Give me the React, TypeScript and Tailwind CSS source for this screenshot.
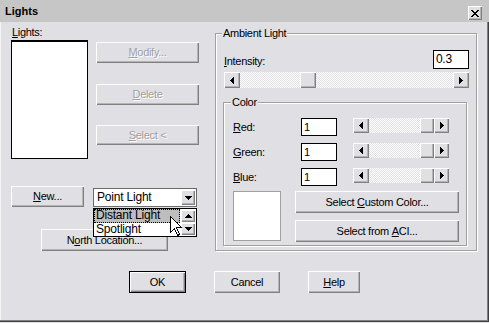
import React from "react";

const raised =
  "bg-[#e0dfe3] shadow-[inset_1px_1px_0_#fff,inset_-1px_-1px_0_#808080,inset_-2px_-2px_0_#b4b4b4]";
const etched =
  "border border-[#a0a0a0] shadow-[inset_1px_1px_0_#fff,1px_1px_0_#fff]";
const track =
  "bg-[image:repeating-conic-gradient(#ffffff_0_25%,#e0dfe3_0_50%)] bg-[length:2px_2px]";
const disabledText = "text-[#a0a0a0] [text-shadow:1px_1px_0_#fff]";

function Tri({ dir }: { dir: "l" | "r" | "u" | "d" }) {
  if (dir === "l" || dir === "r") {
    const pts = dir === "l" ? "4,0 4,7 0,3.5" : "0,0 0,7 4,3.5";
    return (
      <svg width="4" height="7" viewBox="0 0 4 7" shapeRendering="crispEdges">
        <polygon points={pts} fill="#000" />
      </svg>
    );
  }
  const pts = dir === "d" ? "0,0 7,0 3.5,4" : "0,4 7,4 3.5,0";
  return (
    <svg width="7" height="4" viewBox="0 0 7 4" shapeRendering="crispEdges">
      <polygon points={pts} fill="#000" />
    </svg>
  );
}

function ArrowBtn({ dir, cls }: { dir: "l" | "r" | "u" | "d"; cls: string }) {
  return (
    <div className={`${raised} ${cls} flex items-center justify-center shrink-0`}>
      <Tri dir={dir} />
    </div>
  );
}

function Btn({
  children,
  cls,
  disabled,
}: {
  children: React.ReactNode;
  cls: string;
  disabled?: boolean;
}) {
  return (
    <div
      className={`${raised} ${cls} flex items-center justify-center leading-[13px] ${
        disabled ? disabledText : "text-black"
      }`}
    >
      {children}
    </div>
  );
}

function M({ children }: { children: React.ReactNode }) {
  return <span className="underline underline-offset-[1px]">{children}</span>;
}

function ColorRow({ label, m, cls }: { label: string; m: string; cls: string }) {
  return (
    <div className={`flex items-start ${cls}`}>
      <div className="w-[68px] mt-[3px] leading-[13px]">
        <M>{m}</M>
        {label}
      </div>
      <div className="w-[36px] h-[18px] border border-black bg-white pl-[2px] leading-[16px]">1</div>
      <div className="ml-[16px] w-[96px] h-[15px] flex">
        <ArrowBtn dir="l" cls="w-[16px] h-[15px]" />
        <div className={`flex-1 flex justify-end ${track}`}>
          <div className={`${raised} w-[14px] h-[15px]`} />
        </div>
        <ArrowBtn dir="r" cls="w-[15px] h-[15px]" />
      </div>
    </div>
  );
}

export default function App() {
  return (
    <div
      className="relative w-[489px] h-[323px] bg-[#e0dfe3] overflow-hidden text-[11px] tracking-[-0.3px] text-black"
      style={{ fontFamily: '"Liberation Sans", Arial, sans-serif' }}
    >
      <div className="w-[489px] h-[322px] flex flex-col shadow-[inset_-1px_-1px_0_#404040,inset_-2px_-2px_0_#808080,inset_1px_1px_0_#f4f4f4]">
        {/* Title bar */}
        <div className="h-[22px] bg-[#c6c6c6] flex items-start justify-between pl-[5px] pr-[7px]">
          <div className="mt-[5px] font-bold leading-[13px] tracking-normal">Lights</div>
          <div
            className={`mt-[6px] w-[14px] h-[14px] ${raised} flex items-center justify-center`}
          >
            <svg width="8" height="7" viewBox="0 0 8 7" shapeRendering="crispEdges">
              <path d="M0 0h2l2 2.5L6 0h2L5 3.5 8 7H6L4 4.5 2 7H0l3-3.5z" fill="#000" />
            </svg>
          </div>
        </div>

        {/* Middle */}
        <div className="flex pl-[11px]">
          {/* Left column */}
          <div className="w-[188px] flex flex-col">
            <div className="flex">
              <div className="flex flex-col pt-[4px]">
                <div className="h-[14px] leading-[13px] pl-[1px]">
                  <M>L</M>ights:
                </div>
                <div className="w-[77px] h-[119px] border border-black border-t-2 bg-white" />
              </div>
              <div className="ml-[8px] pt-[20px] flex flex-col">
                <Btn cls="w-[103px] h-[21px]" disabled>
                  <M>M</M>odify...
                </Btn>
                <Btn cls="w-[103px] h-[21px] mt-[21px]" disabled>
                  <M>D</M>elete
                </Btn>
                <Btn cls="w-[103px] h-[20px] mt-[20px]" disabled>
                  <M>S</M>elect &lt;
                </Btn>
              </div>
            </div>

            <div className="flex items-start mt-[27px]">
              <Btn cls="w-[73px] h-[21px]">
                <M>N</M>ew...
              </Btn>
              <div className="relative ml-[9px] mt-[2px] w-[104px] h-[19px] border border-[#6a6a6a] bg-white flex items-center justify-between">
                <div className="pl-[3px] leading-[13px] text-[12px] tracking-[-0.2px]">Point Light</div>
                <ArrowBtn dir="d" cls="w-[14px] h-[15px] mr-[1px]" />
                {/* Dropdown list */}
                <div className="absolute left-[-1px] top-[19px] w-[104px] h-[29px] border border-black bg-white flex z-10">
                  <div className="flex-1 flex flex-col">
                    <div className="h-[14px] mr-[1px] bg-[#bdbdbd] outline-1 outline-dotted outline-black -outline-offset-1 pl-[2px] leading-[13px] text-[12px] tracking-[-0.2px]">
                      Distant Light
                    </div>
                    <div className="h-[13px] pl-[2px] leading-[13px] text-[12px] tracking-[-0.2px]">Spotlight</div>
                  </div>
                  <div className="w-[15px] flex flex-col pt-[1px] pr-[1px] gap-[1px]">
                    <ArrowBtn dir="u" cls="w-[14px] h-[12px]" />
                    <ArrowBtn dir="d" cls="w-[14px] h-[12px]" />
                  </div>
                </div>
              </div>
            </div>

            <div className="mt-[22px] ml-[30px]">
              <Btn cls="w-[127px] h-[22px]">
                N<M>o</M>rth Location...
              </Btn>
            </div>
          </div>

          {/* Right group: Ambient Light */}
          <div className={`relative ml-[16px] mt-[11px] w-[262px] h-[218px] ${etched}`}>
            <div className="absolute left-[6px] -top-[7px] px-[1px] bg-[#e0dfe3] leading-[13px]">
              Ambient Light
            </div>
            <div className="flex flex-col pt-[16px]">
              <div className="flex items-center justify-between pl-[8px] pr-[7px] h-[19px]">
                <div className="leading-[13px] mt-[4px]">
                  <M>I</M>ntensity:
                </div>
                <div className="w-[36px] h-[19px] border border-black bg-white pl-[2px] leading-[17px] text-[12px]">
                  0.3
                </div>
              </div>
              <div className="ml-[8px] mt-[3px] w-[245px] h-[16px] flex">
                <ArrowBtn dir="l" cls="w-[16px] h-[16px]" />
                <div className={`flex-1 pl-[60px] ${track}`}>
                  <div className={`${raised} w-[16px] h-[16px]`} />
                </div>
                <ArrowBtn dir="r" cls="w-[16px] h-[16px]" />
              </div>

              {/* Color group */}
              <div className={`relative mt-[14px] ml-[7px] w-[244px] h-[144px] ${etched}`}>
                <div className="absolute left-[7px] -top-[7px] px-[1px] bg-[#e0dfe3] leading-[13px]">
                  Color
                </div>
                <div className="flex flex-col pt-[15px] pl-[9px]">
                  <ColorRow m="R" label="ed:" cls="" />
                  <ColorRow m="G" label="reen:" cls="mt-[7px]" />
                  <ColorRow m="B" label="lue:" cls="mt-[7px]" />
                  <div className="flex mt-[5px]">
                    <div className="w-[48px] h-[50px] border border-[#a0a0a0] bg-white" />
                    <div className="ml-[14px] flex flex-col">
                      <Btn cls="w-[164px] h-[22px]">
                        Select&nbsp;<M>C</M>ustom Color...
                      </Btn>
                      <Btn cls="w-[164px] h-[22px] mt-[7px]">
                        Select from&nbsp;<M>A</M>CI...
                      </Btn>
                    </div>
                  </div>
                </div>
              </div>
            </div>
          </div>
        </div>

        {/* Bottom buttons */}
        <div className="flex pl-[129px] mt-[20px]">
          <div className="w-[57px] h-[22px] border border-black">
            <Btn cls="w-full h-full">OK</Btn>
          </div>
          <Btn cls="ml-[28px] w-[66px] h-[22px]">Cancel</Btn>
          <Btn cls="ml-[28px] w-[52px] h-[22px]">
            <M>H</M>elp
          </Btn>
        </div>
      </div>

      {/* Mouse cursor */}
      <svg
        className="absolute left-[170px] top-[216px] z-20"
        width="13"
        height="21"
        viewBox="0 0 13 21"
        shapeRendering="crispEdges"
      >
        <path
          d="M0.5 0.5 L0.5 16.5 L4.5 12.5 L7.5 19.5 L9.5 18.5 L6.5 11.5 L11.5 11.5 Z"
          fill="#fff"
          stroke="#000"
          strokeWidth="1"
        />
      </svg>
    </div>
  );
}
